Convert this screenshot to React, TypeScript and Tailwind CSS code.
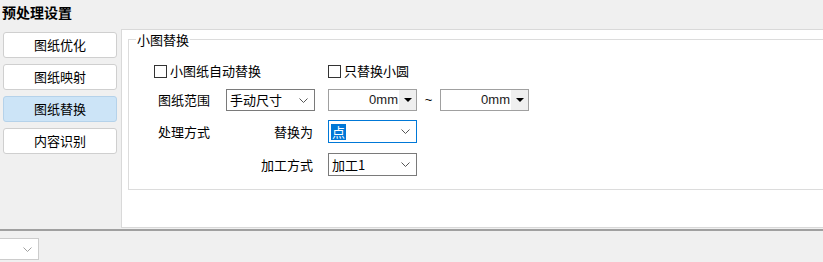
import React from 'react';

const font = { fontFamily: '"Noto Sans CJK SC", "Noto Sans", sans-serif' };

const Chevron: React.FC<{ color?: string }> = ({ color = '#555' }) => (
  <svg width="9" height="5" viewBox="0 0 9 5" className="shrink-0">
    <path d="M0.5 0.5 L4.5 4.5 L8.5 0.5" fill="none" stroke={color} strokeWidth="1" />
  </svg>
);

const Combo: React.FC<{ value: string; focused?: boolean; className?: string }> = ({ value, focused, className = '' }) => (
  <div
    className={`flex items-center justify-between bg-white border pl-[2px] pr-[6px] ${
      focused ? 'border-[#0078d7]' : 'border-[#7a7a7a]'
    } ${className}`}
  >
    {focused ? (
      <span className="bg-[#0078d7] text-white leading-[16px] px-[1px]">{value}</span>
    ) : (
      <span className="leading-[16px] pl-[1px]">{value}</span>
    )}
    <Chevron />
  </div>
);

const MmBox: React.FC = () => (
  <div className="flex h-[22px] w-[89px] border border-[#a0a0a0] bg-white">
    <div className="flex-1 text-right pr-[1px] leading-[20px] text-[#1a1a1a]" style={{ fontFamily: 'Arial, "Liberation Sans", sans-serif' }}>
      0mm
    </div>
    <div className="w-[17px] bg-[#efefef] flex items-center justify-center">
      <svg width="8" height="4" viewBox="0 0 8 4">
        <polygon points="0,0 8,0 4,4" fill="#000" />
      </svg>
    </div>
  </div>
);

const Check: React.FC<{ label: string; className?: string }> = ({ label, className = '' }) => (
  <div className={`flex items-center ${className}`}>
    <div className="w-[13px] h-[13px] border border-[#333] bg-white" />
    <span className="ml-[3px] leading-[18px]">{label}</span>
  </div>
);

const navItems = ['图纸优化', '图纸映射', '图纸替换', '内容识别'];

export default function App() {
  return (
    <div className="w-[823px] h-[262px] overflow-hidden bg-[#f0f0f0] text-[13px] text-black" style={font}>
      <div className="h-[29px] pl-[2px] pt-[3px] text-[14px] font-bold leading-[18px]">预处理设置</div>

      <div className="flex h-[199px]">
        <div className="w-[121px] pl-[3px] pt-[3px] flex flex-col gap-[6px]">
          {navItems.map((item, i) => (
            <div
              key={item}
              className={`w-[114px] h-[26px] rounded-[3px] border flex items-center justify-center leading-[18px] ${
                i === 2 ? 'bg-[#cce4f7] border-[#b5d2ea]' : 'bg-white border-[#cfcfcf]'
              }`}
            >
              {item}
            </div>
          ))}
        </div>

        <div className="flex-1 bg-white border-l border-t border-b border-[#d9d9d9] pl-[6px] pt-[9px] overflow-hidden">
          <div className="relative h-[151px] w-[720px] border border-[#dcdcdc]">
            <span className="absolute left-[7px] top-[-9px] bg-white px-[1px] leading-[17px]">小图替换</span>

            <div className="flex items-center h-[18px] mt-[22px] pl-[25px]">
              <Check label="小图纸自动替换" className="w-[174px]" />
              <Check label="只替换小圆" />
            </div>

            <div className="flex items-center mt-[9px] h-[22px]">
              <div className="flex items-center w-[186px] pl-[29px]">
                <span className="w-[68px] leading-[18px]">图纸范围</span>
                <Combo value="手动尺寸" className="w-[89px] h-[22px]" />
              </div>
              <div className="ml-[13px] flex items-center">
                <MmBox />
                <span className="w-[23px] text-center leading-[18px]" style={{ fontFamily: 'Arial, "Liberation Sans", sans-serif' }}>~</span>
                <MmBox />
              </div>
            </div>

            <div className="flex items-center mt-[9px] h-[23px]">
              <div className="flex items-center w-[199px] pl-[29px] pr-[15px]">
                <span className="leading-[18px]">处理方式</span>
                <span className="ml-auto leading-[18px]">替换为</span>
              </div>
              <Combo value="点" focused className="w-[89px] h-[23px]" />
            </div>

            <div className="flex items-center mt-[10px] h-[23px]">
              <div className="flex items-center justify-end w-[199px] pr-[15px]">
                <span className="leading-[18px]">加工方式</span>
              </div>
              <Combo value="加工1" className="w-[89px] h-[23px]" />
            </div>
          </div>
        </div>
      </div>

      <div className="h-[1px]" />
      <div className="h-[2px] bg-[#a0a0a0]" />

      <div className="pt-[7px]">
        <div className="ml-[-1px] w-[40px] h-[22px] border border-[#cccccc] bg-white flex items-center justify-end pr-[6px]">
          <Chevron color="#a0a0a0" />
        </div>
      </div>
    </div>
  );
}
